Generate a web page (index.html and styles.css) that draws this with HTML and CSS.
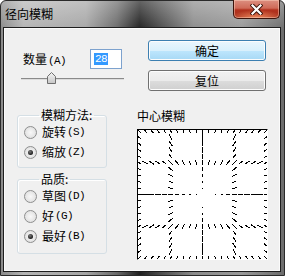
FILE: index.html
```html
<!DOCTYPE html>
<html lang="zh-CN">
<head>
  <meta charset="UTF-8">
  <title>径向模糊</title>
  <link rel="stylesheet" href="styles.css">
</head>
<body>
  <div class="window">
    <div class="titlebar">
      <span class="title">径向模糊</span>
      <div class="close">
        <svg width="13" height="11" viewBox="0 0 13 11">
          <path d="M2.5 1.5 L10.5 9.5 M10.5 1.5 L2.5 9.5" stroke="#3a1208" stroke-width="4" stroke-linecap="square"/>
          <path d="M2.5 1.5 L10.5 9.5 M10.5 1.5 L2.5 9.5" stroke="#fff" stroke-width="2.2" stroke-linecap="square"/>
        </svg>
      </div>
    </div>

    <div class="client">
      <div class="left">
        <div class="amount">
          <span class="label">数量<span class="key">(A)</span></span>
          <span class="field"><span class="sel">28</span></span>
        </div>
        <div class="slider">
          <div class="track"></div>
          <svg class="thumb" width="9" height="12" viewBox="0 0 9 12">
            <defs>
              <linearGradient id="tg" x1="0" y1="0" x2="0" y2="1">
                <stop offset="0" stop-color="#f4f4f4"/>
                <stop offset="1" stop-color="#c6c6c6"/>
              </linearGradient>
            </defs>
            <path d="M0.5 4.5 L4.5 0.5 L8.5 4.5 L8.5 11.5 L0.5 11.5 Z" fill="url(#tg)" stroke="#6f6f6f"/>
          </svg>
        </div>

        <fieldset class="group method">
          <legend>模糊方法:</legend>
          <label class="radio"><span class="dot"></span>旋转<span class="key">(S)</span></label>
          <label class="radio"><span class="dot on"></span>缩放<span class="key">(Z)</span></label>
        </fieldset>

        <fieldset class="group quality">
          <legend>品质:</legend>
          <label class="radio"><span class="dot"></span>草图<span class="key">(D)</span></label>
          <label class="radio"><span class="dot"></span>好<span class="key">(G)</span></label>
          <label class="radio"><span class="dot on"></span>最好<span class="key">(B)</span></label>
        </fieldset>
      </div>

      <div class="right">
        <button class="btn default">确定</button>
        <button class="btn">复位</button>
        <div class="caption">中心模糊</div>
        <div class="preview">
          <svg id="rays" width="129" height="129" viewBox="0 0 129 129" shape-rendering="crispEdges"></svg>
        </div>
      </div>
    </div>
  </div>

  <script>
    // Garis-garis pratinjau blur radial (zoom)
    const rays = document.getElementById("rays");
    const c = 64.5;
    const grid = [-64, -32, 0, 32, 64];
    let d = "";
    for (const g of grid) {
      for (let t = -64; t <= 64.01; t += 6.4) {
        [[t, g], [g, t]].forEach(([x, y]) => {
          const r = Math.hypot(x, y);
          if (r < 3) return;
          const len = Math.min(6, r * 0.13);
          const ux = x / r, uy = y / r;
          const x1 = c + x - ux * len / 2, y1 = c + y - uy * len / 2;
          const x2 = c + x + ux * len / 2, y2 = c + y + uy * len / 2;
          d += `M${x1.toFixed(1)} ${y1.toFixed(1)}L${x2.toFixed(1)} ${y2.toFixed(1)}`;
        });
      }
    }
    const path = document.createElementNS("http://www.w3.org/2000/svg", "path");
    path.setAttribute("d", d);
    path.setAttribute("stroke", "#000");
    path.setAttribute("stroke-width", "1");
    rays.appendChild(path);
  </script>
</body>
</html>
```

FILE: styles.css
```css
body {
  margin: 0;
  font-family: "Noto Sans CJK SC", sans-serif;
  font-size: 12px;
  color: #000;
}

.window {
  width: 285px;
  height: 276px;
  box-sizing: border-box;
  display: flex;
  flex-direction: column;
  border: 1px solid #2a2a2a;
  border-radius: 6px 6px 0 0;
  background:
    linear-gradient(180deg, rgba(255,255,255,0.3), rgba(255,255,255,0) 30px),
    linear-gradient(90deg, #8a8a8a 0%, #b4b4b4 8%, #a6a6a6 30%, #6a6a6a 41%, #202020 49%, #4a4a4a 56%, #8c8c8c 68%, #9a9a9a 85%, #6c6c6c 100%);
}

.titlebar {
  height: 26px;
  display: flex;
  justify-content: space-between;
  align-items: flex-start;
}

.title {
  margin: 5px 0 0 4px;
  line-height: 16px;
  font-size: 12px;
}

.close {
  width: 47px;
  height: 19px;
  box-sizing: border-box;
  margin: -1px 4px 0 0;
  display: flex;
  justify-content: center;
  align-items: center;
  border: 1px solid #3c140c;
  border-top: none;
  border-radius: 0 0 5px 5px;
  box-shadow: inset 0 0 0 1px rgba(255,220,200,0.45);
  background:
    radial-gradient(ellipse 60% 45% at 50% 100%, rgba(255,160,110,0.8), rgba(255,160,110,0) 100%),
    linear-gradient(180deg, #dc8f80 0%, #cf6a58 45%, #b2321e 55%, #a8301d 100%);
}

.client {
  flex: 1;
  margin: 0 3px 3px 2px;
  border: 1px solid #1e1e1e;
  box-shadow: inset 0 0 0 1px #fbfbfb;
  background: #f0f0f0;
  display: flex;
  gap: 12px;
  padding: 12px 0 0 13px;
}

.left {
  width: 108px;
  margin-top: 9px;
}

.amount {
  display: flex;
  align-items: center;
  height: 20px;
}

.label {
  margin: 2px 0 0 6px;
  line-height: 16px;
}

.key {
  font-family: "Liberation Mono", monospace;
  font-size: 11px;
  letter-spacing: -0.6px;
  margin-left: 1px;
}

.field {
  margin: 0 3px 0 auto;
  width: 32px;
  height: 20px;
  box-sizing: border-box;
  border: 1px solid #7da2ce;
  background: #fff;
  padding: 3px 0 0 3px;
}

.sel {
  display: inline-block;
  height: 12px;
  background: #3399ff;
  color: #fff;
  font-family: "Liberation Mono", monospace;
  font-size: 11px;
  line-height: 12px;
  letter-spacing: -0.6px;
  padding: 0 1px;
  vertical-align: top;
}

.slider {
  position: relative;
  height: 12px;
  margin-top: 2px;
}

.track {
  padding-top: 7px;
  margin-left: 4px;
  width: 103px;
  height: 0;
  border-bottom: 1px solid #8a8a8a;
  box-shadow: 0 1px 0 #dcdcdc;
}

.thumb {
  position: absolute;
  left: 30px;
  top: 1px;
}

.group {
  margin: 0;
  width: 90px;
  box-sizing: border-box;
  border: 1px solid #d5dfe5;
  border-radius: 3px;
  box-shadow: inset 1px 1px 0 #fff;
  padding: 0 0 0 6px;
  min-inline-size: auto;
}

.group legend {
  padding: 0 2px;
  margin-left: 15px;
  line-height: 14px;
}

.method {
  margin-top: 25px;
  padding-bottom: 5px;
}

.quality {
  margin-top: 4px;
  padding-bottom: 7px;
}

.radio {
  display: flex;
  align-items: center;
  height: 20px;
  line-height: 16px;
}

.dot {
  width: 13px;
  height: 13px;
  box-sizing: border-box;
  border: 1px solid #8e8f8f;
  border-radius: 50%;
  background: radial-gradient(circle at 50% 50%, #f8f8f8 0%, #e6e6e6 60%, #d0d0d0 100%);
  margin-right: 5px;
  display: flex;
  justify-content: center;
  align-items: center;
}

.dot.on::after {
  content: "";
  width: 5px;
  height: 5px;
  border-radius: 50%;
  background: radial-gradient(circle at 40% 35%, #7a7a7a, #1c1c1c 70%);
}

.right {
  width: 131px;
}

.btn {
  display: block;
  width: 118px;
  height: 21px;
  margin: 0 0 9px 11px;
  padding: 0;
  font: inherit;
  line-height: 18px;
  color: #000;
  border: 1px solid #707070;
  border-radius: 3px;
  box-shadow: inset 0 0 0 1px #fcfcfc;
  background: linear-gradient(180deg, #f2f2f2 0%, #ebebeb 50%, #dddddd 50%, #cfcfcf 100%);
}

.btn.default {
  border-color: #3c7fb1;
  background: linear-gradient(180deg, #eaf6fd 0%, #d9f0fc 50%, #bee6fd 50%, #a7d9f5 100%);
}

.caption {
  margin-top: 17px;
  line-height: 16px;
}

.preview {
  margin-top: 5px;
  width: 131px;
  height: 131px;
  box-sizing: border-box;
  background: #fff;
  border-top: 1px solid #000;
  border-left: 1px solid #000;
  border-right: 1px solid #fff;
  border-bottom: 1px solid #fff;
}

#rays {
  display: block;
}
```
